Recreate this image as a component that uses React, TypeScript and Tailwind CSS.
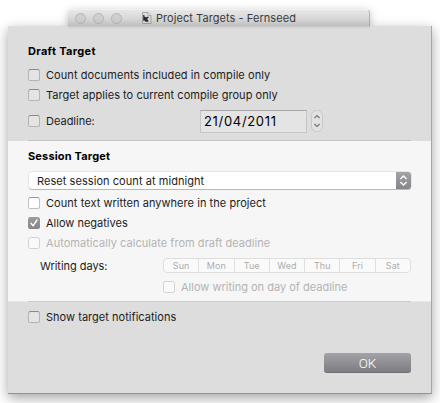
import React from "react";

const days = ["Sun", "Mon", "Tue", "Wed", "Thu", "Fri", "Sat"];

function Box({ checked = false, disabled = false, light = false }: { checked?: boolean; disabled?: boolean; light?: boolean }) {
  if (checked) {
    return (
      <span className="flex h-3 w-3 shrink-0 items-center justify-center rounded-[2.5px] bg-linear-to-b from-[#9d9ca1] to-[#858489]">
        <svg width="12" height="12" viewBox="0 0 12 12" fill="none" stroke="#fff" strokeWidth="1.4" strokeLinecap="round" strokeLinejoin="round">
          <path d="M3 6.3 5.1 8.9 9 3" />
        </svg>
      </span>
    );
  }
  const look = disabled
    ? "border-[#d2d2d2] bg-[#f9f9f9]"
    : light
      ? "border-[#c0c0c0] border-t-[#999] bg-white"
      : "border-[#b4b4b4] border-t-[#8b8b8b] bg-[#e4e4e4]";
  return <span className={`h-3 w-3 shrink-0 rounded-[2.5px] border ${look}`} />;
}

function Option({ label, track, ...box }: { label: string; track: string; checked?: boolean; disabled?: boolean; light?: boolean }) {
  return (
    <label className={`flex h-5 items-center gap-[6px] ${box.disabled ? "text-[#b4b4b4]" : "text-[#1c1c1c]"}`}>
      <Box {...box} />
      <span className={track}>{label}</span>
    </label>
  );
}

export default function App() {
  return (
    <div className="h-[403px] w-[440px] overflow-hidden bg-white pt-[9px] font-['Inter','Liberation_Sans',sans-serif] text-[11px] leading-[14px] whitespace-nowrap">
      <header className="ml-[68px] flex h-[17px] w-[302px] items-center rounded-t-[4px] border-t border-r border-t-[#f1f1f1] border-r-[#b4b4b4] bg-linear-to-b from-[#e6e6e6] to-[#cfcfcf] pl-[7px] shadow-[0_2px_9px_rgba(0,0,0,0.25)]">
        <div className="flex gap-[7px]">
          <i className="h-[11px] w-[11px] rounded-full border border-[#b8b8b8] bg-[#d0d0d0]" />
          <i className="h-[11px] w-[11px] rounded-full border border-[#b8b8b8] bg-[#d0d0d0]" />
          <i className="h-[11px] w-[11px] rounded-full border border-[#b8b8b8] bg-[#d0d0d0]" />
        </div>
        <svg className="ml-[20px]" width="10" height="12" viewBox="0 0 10 12">
          <path d="M.5.5h5.5l3 3v8h-8.5z" fill="#dcdcdc" stroke="#a4a4a4" />
          <path d="M6 .5v3h3" fill="#eee" stroke="#aaa" />
          <path d="M1.2 3h1L2.8 5l1.7.2 1.7-.7.6 1-1.8 1.5 1.3 1.3v1.4H3.5L2.2 8.3 1.2 9z" fill="#2b2b2b" />
        </svg>
        <h1 className="ml-[4px] text-[11px] tracking-[0.06px] text-[#3c3c3c]">Project Targets - Fernseed</h1>
      </header>
      <main className="relative ml-2 flex h-[368px] w-[424px] flex-col border-r border-b border-r-[#a6a6a6] border-b-[#929292] bg-[#dddddd] shadow-[0_4px_12px_rgba(0,0,0,0.36)]">
        <div className="ml-[60px] h-[3px] w-[302px] bg-linear-to-b from-[#c6c6c6] to-[#dddddd]" />
        <section className="h-[111px] pr-5 pl-5">
          <h2 className="pt-[15px] font-bold tracking-[0.32px] text-black">Draft Target</h2>
          <div className="pt-[7px]">
            <Option label="Count documents included in compile only" track="tracking-[0.075px]" />
            <Option label="Target applies to current compile group only" track="tracking-[0.035px]" />
          </div>
          <div className="flex h-8 items-center">
            <div className="w-[172px]">
              <Option label="Deadline:" track="tracking-[0px]" />
            </div>
            <div className="flex h-[23px] w-[107px] items-center border border-[#c5c5c5] border-t-[#a8a8a8] bg-[#e4e4e4] pl-[3px] text-[13px] tracking-[0.68px] text-black">21/04/2011</div>
            <svg className="ml-1" width="12" height="22" viewBox="0 0 12 22" fill="none">
              <rect x=".5" y=".5" width="11" height="21" rx="5" fill="#e2e2e2" stroke="#c8c8c8" />
              <path d="m3.4 8 2.6-2.5L8.6 8M3.4 14 6 16.5 8.6 14" stroke="#777" strokeWidth="1.2" />
            </svg>
          </div>
        </section>
        <div className="mx-5 h-px shrink-0 bg-[#c4c4c4]" />
        <section className="h-[160px] bg-[#f6f6f6] px-5">
          <h2 className="pt-2 font-bold tracking-[0.16px] text-black">Session Target</h2>
          <div className="mt-[9px] ml-[1px] flex h-[17px] items-center justify-between rounded-[3px] bg-white pl-2 text-[#1c1c1c] shadow-[0_1px_0_#b9b9b9,0_0_0_0.5px_#d4d4d4]">
            <span className="tracking-[0.06px]">Reset session count at midnight</span>
            <span className="h-[17px] w-[15px] rounded-r-[3px] bg-linear-to-b from-[#a4a3a8] to-[#85848a]">
              <svg width="15" height="17" viewBox="0 0 15 17" fill="none" stroke="#fff" strokeWidth="1.3">
                <path d="m4.4 7 3.1-3 3.1 3M4.4 10l3.1 3 3.1-3" />
              </svg>
            </span>
          </div>
          <div className="pt-1">
            <Option light label="Count text written anywhere in the project" track="tracking-[0.05px]" />
            <Option checked label="Allow negatives" track="tracking-[0px]" />
            <Option disabled label="Automatically calculate from draft deadline" track="tracking-[0.04px]" />
          </div>
          <div className="mt-[5px] flex h-[15px] items-center">
            <span className="ml-3 w-[123px] tracking-[-0.04px] text-[#1c1c1c]">Writing days:</span>
            <div className="flex h-[15px] w-[248px] divide-x divide-[#e0e0e0] rounded-[4px] border border-[#dedede] bg-[#fafafa] text-[9px] leading-[14px] text-[#acacac]">
              {days.map((day) => (
                <span key={day} className="flex-1 text-center tracking-[0.1px]">{day}</span>
              ))}
            </div>
          </div>
          <div className="mt-1 ml-[135px]">
            <Option disabled label="Allow writing on day of deadline" track="tracking-[0px]" />
          </div>
        </section>
        <div className="flex h-px shrink-0 bg-[#e8e8e8]">
          <div className="ml-5 w-[383px] bg-[#cccccc]" />
        </div>
        <footer className="px-5 pt-[5px]">
          <Option label="Show target notifications" track="tracking-[0.03px]" />
          <button className="mt-[26px] ml-auto flex h-5 w-[87px] items-center justify-center rounded-[3px] border-b border-[#707074] bg-linear-to-b from-[#a3a2a7] to-[#7e7d82] font-['Roboto',sans-serif] text-[13.5px] font-light text-white">OK</button>
        </footer>
      </main>
    </div>
  );
}
